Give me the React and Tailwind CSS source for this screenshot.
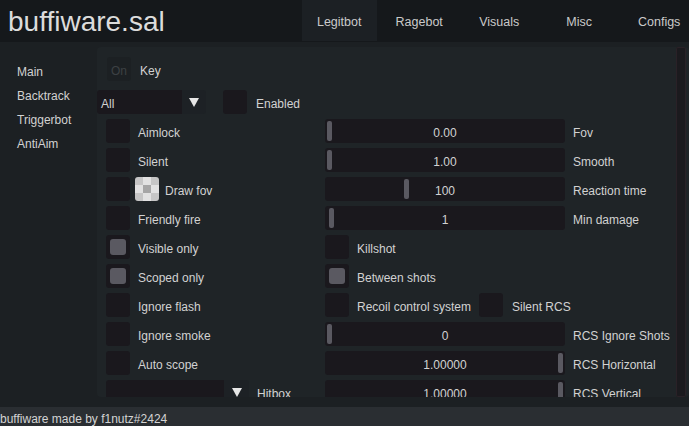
import React from "react";

const tabs = ["Legitbot", "Ragebot", "Visuals", "Misc", "Configs"];
const sideItems = ["Main", "Backtrack", "Triggerbot", "AntiAim"];

// left / right cells for each row of the Legitbot page
const rows = [
  { left: { type: "check", label: "Aimlock" }, right: { type: "slider", value: "0.00", pos: 2, label: "Fov" } },
  { left: { type: "check", label: "Silent" }, right: { type: "slider", value: "1.00", pos: 2, label: "Smooth" } },
  { left: { type: "color", label: "Draw fov" }, right: { type: "slider", value: "100", pos: 79, label: "Reaction time" } },
  { left: { type: "check", label: "Friendly fire" }, right: { type: "slider", value: "1", pos: 4, label: "Min damage" } },
  { left: { type: "check", label: "Visible only", on: true }, right: { type: "check", label: "Killshot" } },
  { left: { type: "check", label: "Scoped only", on: true }, right: { type: "check", label: "Between shots", on: true } },
  { left: { type: "check", label: "Ignore flash" }, right: { type: "rcs" } },
  { left: { type: "check", label: "Ignore smoke" }, right: { type: "slider", value: "0", pos: 2, label: "RCS Ignore Shots" } },
  { left: { type: "check", label: "Auto scope" }, right: { type: "slider", value: "1.00000", pos: 233, label: "RCS Horizontal" } },
  { left: { type: "combo", label: "Hitbox" }, right: { type: "slider", value: "1.00000", pos: 233, label: "RCS Vertical" } },
];

// text sits a little low in the original widgets
const T = ({ className = "", children }) => (
  <span className={`relative top-[2px] whitespace-nowrap ${className}`}>{children}</span>
);

const Checkbox = ({ on }) => (
  <div className="w-[24px] h-[24px] shrink-0 rounded-[3px] bg-[#1a181d] p-[4px]">
    {on && <div className="w-full h-full rounded-[3px] bg-[#5a5961]" />}
  </div>
);

const Check = ({ label, on }) => (
  <div className="flex items-center h-[24px]">
    <Checkbox on={on} />
    <T className="ml-[8px]">{label}</T>
  </div>
);

const Swatch = () => {
  const cells = ["#c6c6c6", "#e2e2e2", "#c6c6c6", "#e2e2e2", "#a6a6a6", "#e2e2e2", "#c6c6c6", "#e2e2e2", "#c6c6c6"];
  return (
    <div className="w-[24px] h-[24px] shrink-0 rounded-[3px] overflow-hidden grid grid-cols-3 grid-rows-3">
      {cells.map((c, i) => (
        <div key={i} style={{ backgroundColor: c }} />
      ))}
    </div>
  );
};

const Slider = ({ value, pos, label }) => (
  <div className="flex items-center h-[24px]">
    <div className="relative w-[240px] h-[24px] rounded-[3px] bg-[#1a181d] flex items-center justify-center">
      <div
        className="absolute top-[2px] w-[5px] h-[20px] rounded-[2px] bg-[#5a5961]"
        style={{ left: pos }}
      />
      <T>{value}</T>
    </div>
    <T className="ml-[8px]">{label}</T>
  </div>
);

const Arrow = () => (
  <svg width="10" height="9" viewBox="0 0 10 9" className="block">
    <path d="M0 0 H10 L5 9 Z" fill="#e6e6e6" />
  </svg>
);

const LeftCell = ({ cell }) => {
  if (cell.type === "color") {
    return (
      <div className="flex items-center h-[24px]">
        <Checkbox />
        <div className="ml-[5px]">
          <Swatch />
        </div>
        <T className="ml-[6px]">{cell.label}</T>
      </div>
    );
  }
  if (cell.type === "combo") {
    return (
      <div className="flex items-center h-[24px]">
        <div className="flex w-[143px] h-[24px] rounded-[3px] overflow-hidden">
          <div className="flex-1 bg-[#1a181d]" />
          <div className="w-[25px] bg-[#1d2125] flex items-center justify-center">
            <Arrow />
          </div>
        </div>
        <T className="ml-[8px]">{cell.label}</T>
      </div>
    );
  }
  return <Check label={cell.label} on={cell.on} />;
};

const RightCell = ({ cell }) => {
  if (cell.type === "slider") return <Slider {...cell} />;
  if (cell.type === "rcs") {
    return (
      <div className="flex items-center h-[24px]">
        <Checkbox />
        <T className="ml-[8px] w-[114px]">Recoil control system</T>
        <div className="ml-[8px]">
          <Checkbox />
        </div>
        <T className="ml-[9px]">Silent RCS</T>
      </div>
    );
  }
  return <Check label={cell.label} on={cell.on} />;
};

export default function App() {
  return (
    <div
      className="w-[689px] h-[426px] overflow-hidden flex flex-col bg-[#1c2023] text-[#d2d2d2] text-[12px] leading-none"
      style={{ fontFamily: '"Liberation Sans", Arial, sans-serif' }}
    >
      {/* Header */}
      <div className="h-[42px] shrink-0 bg-[#15181b] flex">
        <div className="pl-[8px] pt-[7px] text-[28px] text-[#dcdcdc] leading-[30px] whitespace-nowrap">
          buffiware.sal
        </div>
        <div className="flex ml-[137px]">
          {tabs.map((t, i) => (
            <div
              key={t}
              className={`w-[75px] mr-[5px] shrink-0 h-[41px] flex items-center justify-center text-[12.5px] text-[#cacaca] ${
                i === 0 ? "bg-[#1c2024]" : ""
              }`}
            >
              <T>{t}</T>
            </div>
          ))}
        </div>
      </div>

      {/* Body */}
      <div className="flex-1 flex min-h-0">
        <div className="w-[97px] shrink-0 pl-[17px] pt-[16px]">
          {sideItems.map((s) => (
            <div key={s} className="h-[24px] flex items-center">
              <T>{s}</T>
            </div>
          ))}
        </div>

        <div className="flex-1 flex mt-[5px] mb-[10px] rounded-[4px] bg-[#1f2427] overflow-hidden">
          <div className="flex-1 pl-[9px] pt-[10px] overflow-hidden">
            <div className="flex items-center h-[24px]">
              <div className="ml-[1px] w-[24px] h-[24px] rounded-[3px] bg-[#1c2023] flex items-center justify-center text-[#3c4044]">
                <T>On</T>
              </div>
              <T className="ml-[9px]">Key</T>
            </div>

            <div className="flex items-center h-[24px] mt-[9px] -ml-[9px]">
              <div className="flex w-[109px] h-[24px] rounded-[3px] overflow-hidden">
                <div className="flex-1 bg-[#1a181d] flex items-center pl-[4px]">
                  <T>All</T>
                </div>
                <div className="w-[24px] bg-[#1d2125] flex items-center justify-center">
                  <Arrow />
                </div>
              </div>
              <div className="ml-[17px]">
                <Checkbox />
              </div>
              <T className="ml-[9px]">Enabled</T>
            </div>

            <div className="flex flex-col gap-[5px] mt-[5px]">
              {rows.map((r, i) => (
                <div key={i} className="flex h-[24px]">
                  <div className="w-[219px] shrink-0">
                    <LeftCell cell={r.left} />
                  </div>
                  <RightCell cell={r.right} />
                </div>
              ))}
            </div>
          </div>
          <div className="w-[10px] shrink-0 mr-[3px] rounded-[2px] bg-[#1b1a1e] border border-[#2a2127]" />
        </div>
      </div>

      {/* Footer */}
      <div className="h-[19px] shrink-0 bg-[#2a2e32] flex items-center text-[#d4d4d4]">
        <T className="top-[1px]">buffiware made by f1nutz#2424</T>
      </div>
    </div>
  );
}
